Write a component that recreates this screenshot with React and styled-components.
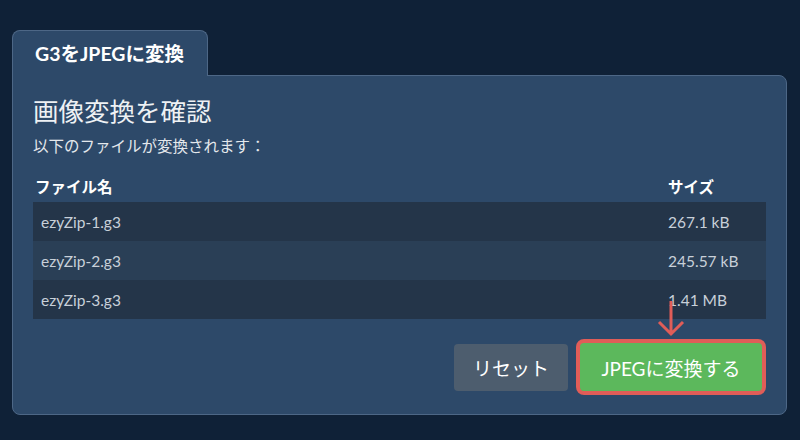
import React from 'react'
import styled, { createGlobalStyle } from 'styled-components'

const GlobalStyle = createGlobalStyle`
  html, body {
    margin: 0;
    padding: 0;
    background: #0f2137;
    font-family: Lato, "Noto Sans CJK JP", sans-serif;
  }
`
const Page = styled.div`
  width: 800px;
  height: 440px;
  padding: 30px 13px 0 12px;
  box-sizing: border-box;
`
const Tab = styled.div`
  position: relative;
  z-index: 1;
  width: 196px;
  height: 46px;
  box-sizing: border-box;
  padding: 10px 0 0 22px;
  background: #2d4969;
  border: 1px solid #4d6786;
  border-bottom: none;
  border-radius: 8px 8px 0 0;
  margin-bottom: -1px;
  color: #ffffff;
  font-size: 19.5px;
  font-weight: 700;
  line-height: 26px;
`
const Panel = styled.div`
  background: #2d4969;
  border: 1px solid #4d6786;
  border-radius: 0 8px 8px 8px;
  padding: 20px 20px 19px 20px;
`
const Heading = styled.h2`
  margin: 0;
  font-size: 25.5px;
  font-weight: 400;
  line-height: 30px;
  color: #eef1f4;
`
const Sub = styled.p`
  margin: 9px 0 0;
  font-size: 15.5px;
  line-height: 22px;
  color: #e4e8ec;
`
const Table = styled.div`
  margin-top: 19px;
`
const Row = styled.div`
  display: grid;
  grid-template-columns: 627px 1fr;
  height: ${p => (p.$head ? '26px' : '39px')};
  align-items: ${p => (p.$head ? 'start' : 'center')};
  background: ${p => (p.$head ? 'transparent' : p.$odd ? '#2a3f56' : '#243549')};
`
const Cell = styled.div`
  padding: 0 8px 0 ${p => (p.$first ? '2px' : '8px')};
  font-size: 15.5px;
  line-height: 22px;
  font-weight: ${p => (p.$head ? 700 : 400)};
  color: ${p => (p.$head ? '#ffffff' : '#c8d0d9')};
`
const Actions = styled.div`
  position: relative;
  display: flex;
  justify-content: flex-end;
  align-items: center;
  gap: 12px;
  margin-top: 20px;
  padding-right: 4px;
`
const Button = styled.button`
  height: ${p => (p.$primary ? '48px' : '47px')};
  width: ${p => (p.$primary ? '182px' : '114px')};
  margin: ${p => (p.$primary ? '4px 0' : '0')};
  padding: 0;
  border: none;
  border-radius: 4px;
  font-family: inherit;
  font-size: 19px;
  color: #ffffff;
  background: ${p => (p.$primary ? '#5cb85c' : '#4d5d6e')};
  box-shadow: ${p => (p.$primary ? '0 0 0 4px #e05d58' : 'none')};
`
const Arrow = styled.svg`
  position: absolute;
  right: 80px;
  top: -38px;
`

const files = [
  { name: 'ezyZip-1.g3', size: '267.1 kB' },
  { name: 'ezyZip-2.g3', size: '245.57 kB' },
  { name: 'ezyZip-3.g3', size: '1.41 MB' },
]

export default function App() {
  return (
    <Page>
      <GlobalStyle />
      <Tab>G3をJPEGに変換</Tab>
      <Panel>
        <Heading>画像変換を確認</Heading>
        <Sub>以下のファイルが変換されます：</Sub>
        <Table>
          <Row $head>
            <Cell $head $first>ファイル名</Cell>
            <Cell $head>サイズ</Cell>
          </Row>
          {files.map((f, i) => (
            <Row key={f.name} $odd={i % 2 === 1}>
              <Cell>{f.name}</Cell>
              <Cell>{f.size}</Cell>
            </Row>
          ))}
        </Table>
        <Actions>
          <Button>リセット</Button>
          <Button $primary>JPEGに変換する</Button>
          <Arrow width="30" height="36" viewBox="0 0 30 36">
            <path d="M15 0 V33 M3 21 L15 33 L27 21" fill="none" stroke="#e05d58" strokeWidth="3" />
          </Arrow>
        </Actions>
      </Panel>
    </Page>
  )
}
